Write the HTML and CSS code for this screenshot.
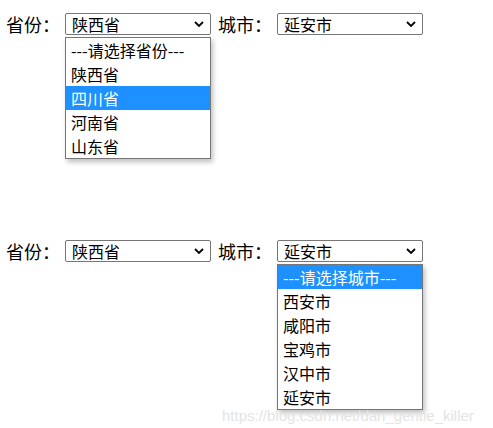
FILE: index.html
```html
<!DOCTYPE html>
<html lang="zh-CN">
<head>
<meta charset="utf-8">
<title>省市联动</title>
<link rel="stylesheet" href="styles.css">
</head>
<body>
<div class="page">
  <div class="row">
    <span class="label">省份：</span>
    <div class="select">
      <span class="value">陕西省</span>
      <svg class="chev" viewBox="0 0 10 6" width="10" height="6"><path d="M1 1 L5 5 L9 1" fill="none" stroke="#000" stroke-width="1.8"/></svg>
      <ul class="menu">
        <li>---请选择省份---</li>
        <li>陕西省</li>
        <li class="active">四川省</li>
        <li>河南省</li>
        <li>山东省</li>
      </ul>
    </div>
    <span class="label city">城市：</span>
    <div class="select">
      <span class="value">延安市</span>
      <svg class="chev" viewBox="0 0 10 6" width="10" height="6"><path d="M1 1 L5 5 L9 1" fill="none" stroke="#000" stroke-width="1.8"/></svg>
    </div>
  </div>

  <div class="row second">
    <span class="label">省份：</span>
    <div class="select">
      <span class="value">陕西省</span>
      <svg class="chev" viewBox="0 0 10 6" width="10" height="6"><path d="M1 1 L5 5 L9 1" fill="none" stroke="#000" stroke-width="1.8"/></svg>
    </div>
    <span class="label city">城市：</span>
    <div class="select">
      <span class="value">延安市</span>
      <svg class="chev" viewBox="0 0 10 6" width="10" height="6"><path d="M1 1 L5 5 L9 1" fill="none" stroke="#000" stroke-width="1.8"/></svg>
      <ul class="menu">
        <li class="active">---请选择城市---</li>
        <li>西安市</li>
        <li>咸阳市</li>
        <li>宝鸡市</li>
        <li>汉中市</li>
        <li>延安市</li>
      </ul>
    </div>
  </div>
  <div class="watermark">https://blog.csdn.net/dan_gentle_killer</div>
</div>
</body>
</html>
```

FILE: styles.css
```css
html, body {
  margin: 0;
  padding: 0;
  background: #fff;
}
.page {
  position: relative;
  width: 493px;
  height: 428px;
  padding: 13px 0 0 6px;
  box-sizing: border-box;
  font-family: "Noto Sans CJK SC", "Microsoft YaHei", sans-serif;
  color: #000;
}
.row {
  display: flex;
  align-items: center;
  height: 22px;
}
.row.second {
  margin-top: 205px;
}
.label {
  font-size: 18px;
  line-height: 22px;
  margin-right: 5px;
  white-space: nowrap;
}
.label.city {
  margin-left: 7px;
}
.select {
  position: relative;
  box-sizing: border-box;
  width: 146px;
  height: 22px;
  border: 1px solid #767676;
  border-radius: 2px;
  background: #fff;
  display: flex;
  align-items: center;
  justify-content: space-between;
  padding: 0 6px 0 6px;
}
.value {
  font-size: 16px;
  line-height: 20px;
}
.chev {
  display: block;
}
.menu {
  position: absolute;
  top: 23px;
  left: -1px;
  width: 146px;
  box-sizing: border-box;
  margin: 0;
  padding: 0;
  list-style: none;
  border: 1px solid #767676;
  background: #fff;
  box-shadow: 2px 3px 5px rgba(0, 0, 0, 0.25);
  z-index: 2;
}
.menu li {
  height: 24px;
  line-height: 24px;
  font-size: 16px;
  padding-left: 5px;
  white-space: nowrap;
}
.menu li.active {
  background: #1e90ff;
  color: #fff;
}
.watermark {
  position: absolute;
  left: 222px;
  top: 408px;
  font-family: "Liberation Sans", Arial, sans-serif;
  font-size: 15px;
  line-height: 15px;
  color: #e4e4e4;
  z-index: 3;
  white-space: nowrap;
}
```
